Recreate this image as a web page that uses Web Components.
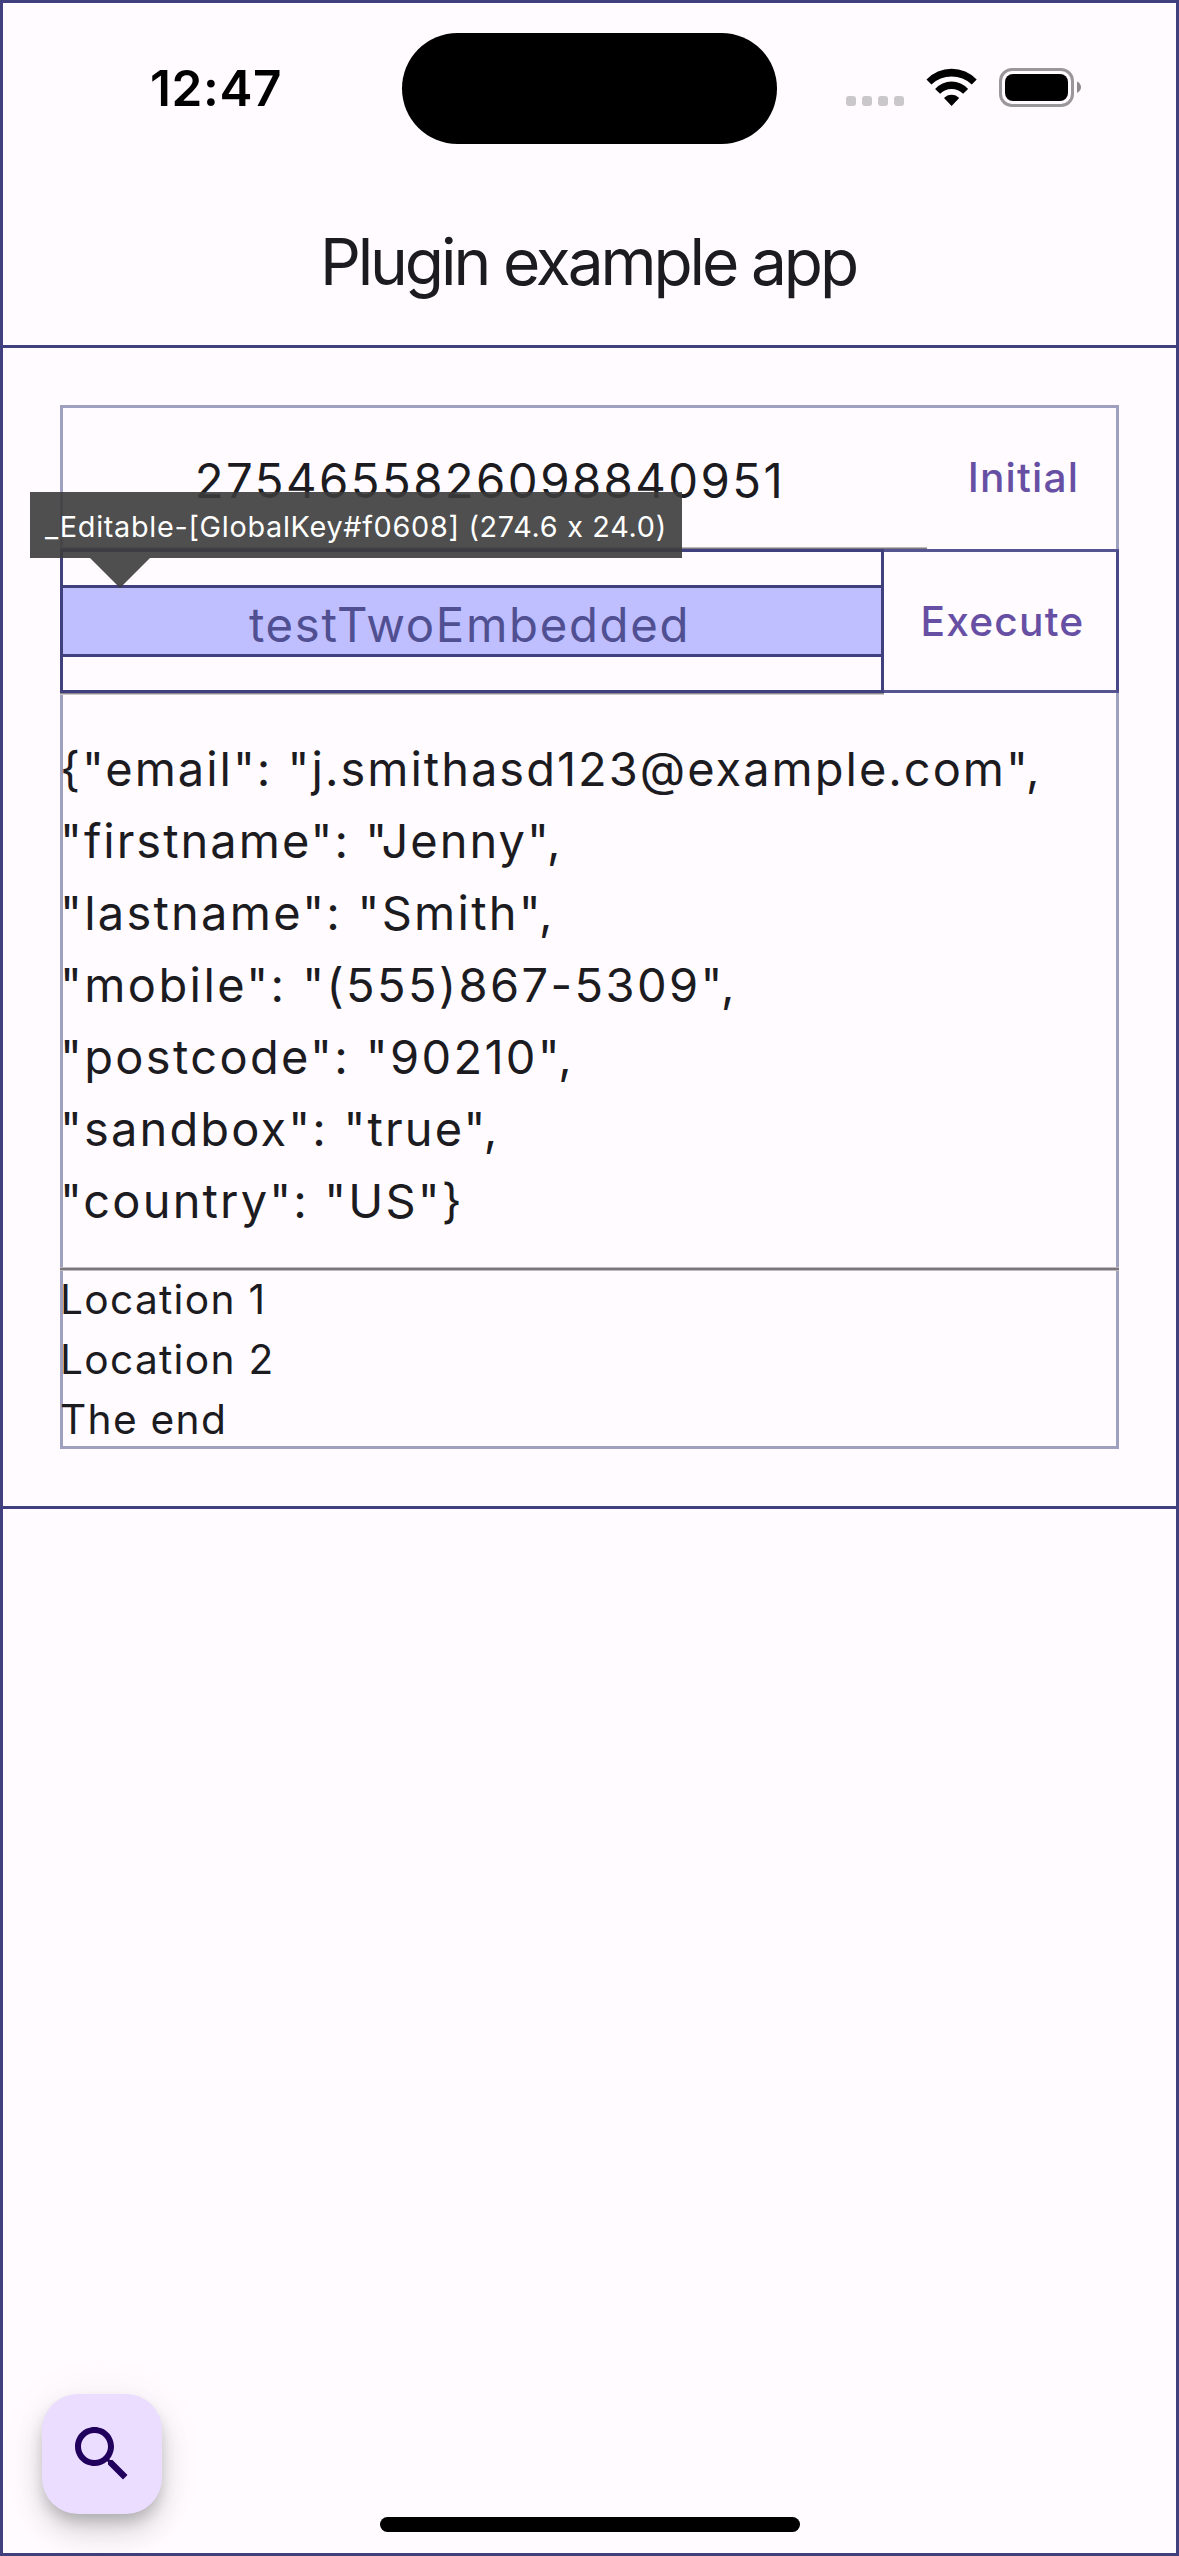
<!DOCTYPE html>
<html lang="en">
<head>
<meta charset="utf-8">
<title>Plugin example app</title>
<style>
html, body { margin: 0; padding: 0; }
body { width: 1179px; height: 2556px; overflow: hidden; background: #fffbff; font-family: Inter, "Liberation Sans", sans-serif; color: #1c1b1f; }
</style>
</head>
<body>
<plugin-app></plugin-app>
<script>
const define = (name, html) => customElements.define(name, class extends HTMLElement {
  constructor() {
    super();
    const t = document.createElement('template');
    t.innerHTML = html;
    this.attachShadow({ mode: 'open' }).append(t.content.cloneNode(true));
  }
});

define('status-bar', `
<style>
:host { display: grid; grid-template-columns: 399px 375px 1fr; align-items: center; height: 171px; color: #000; }
.time { padding: 0 0 2px 147px; font-size: 49.5px; font-weight: 600; line-height: 60px; letter-spacing: .62px; white-space: nowrap; }
.island { height: 111px; border-radius: 55.5px; background: #000; }
.signs { display: flex; padding: 0 0 2px 69px; height: 39px; }
svg { display: block; }
</style>
<div class="time">12:47</div>
<div class="island"></div>
<div class="signs">
  <svg width="240" height="39" viewBox="846 68 240 39">
    <g fill="#cac8ca"><rect x="846" y="96" width="10" height="10" rx="3"/><rect x="862" y="96" width="10" height="10" rx="3"/><rect x="878" y="96" width="10" height="10" rx="3"/><rect x="894" y="96" width="10" height="10" rx="3"/></g>
    <path d="M926.5 79.5 A34.5 34.5 0 0 1 976.7 79.5 L971.8 84.4 A29.5 29.5 0 0 0 931.4 84.4 Z"/>
    <path d="M935.1 88.9 A22.3 22.3 0 0 1 968.1 88.9 L963.1 93.8 A16.4 16.4 0 0 0 940.1 93.8 Z"/>
    <path d="M944 98 A10.3 10.3 0 0 1 959.2 98 L951.6 106 Z"/>
    <rect x="1000.5" y="69.5" width="72" height="36" rx="11.5" fill="none" stroke="#999799" stroke-width="3"/>
    <rect x="1005" y="74" width="63" height="27" rx="8"/>
    <path d="M1077 81.5 Q1081 83.5 1081 87.3 Q1081 91 1077 93 Z" fill="#8c8a8c"/>
  </svg>
</div>`);

define('title-bar', `
<style>
:host { display: flex; justify-content: center; align-items: center; box-sizing: border-box; height: 174px; padding-top: 4.5px; border-bottom: 3px solid #40407f; }
span { font-size: 64px; line-height: 78px; letter-spacing: -3.1px; white-space: nowrap; margin-left: -3px; }
</style>
<span><slot></slot></span>`);

define('text-button', `
<style>
:host { display: flex; justify-content: center; align-items: center; box-sizing: border-box; height: 144px; padding-top: 2px; color: #6750a4; }
span { font-size: 40.7px; font-weight: 500; line-height: 60px; letter-spacing: 1.2px; margin-right: var(--nudge, -1px); }
</style>
<span><slot></slot></span>`);

define('number-field', `
<style>
:host { display: flex; flex-direction: column; justify-content: center; align-items: center; box-sizing: border-box; width: 867px; height: 145px; padding-top: 9px; border-bottom: 2px solid #7f7a80; box-shadow: inset 0 -1px #bbb6bb; }
span { font-size: 47.3px; line-height: 72px; letter-spacing: 2.43px; margin-right: 7px; }
</style>
<span><slot></slot></span>`);

define('selected-field', `
<style>
:host { display: flex; flex-direction: column; justify-content: center; box-sizing: border-box; width: 824px; height: 144px; border: 3px solid #40407f; box-shadow: 0 1px #8d888e, 0 2px #cbc6cb; }
.editable { display: flex; justify-content: center; box-sizing: border-box; height: 72px; background: #bfbfff; border: solid #40407f; border-width: 3px 0; padding-top: 2px; color: #504f91; }
span { font-size: 47.3px; line-height: 70px; letter-spacing: 1.67px; margin-right: 5px; }
</style>
<div class="editable"><span><slot></slot></span></div>`);

define('json-line', `
<style>
:host { display: block; font-size: 47px; line-height: 72px; height: 72px; letter-spacing: var(--track, 2px); white-space: nowrap; font-feature-settings: "calt" 0; }
</style>
<slot></slot>`);

define('inspector-tip', `
<style>
:host { position: absolute; display: block; }
.label { box-sizing: border-box; width: 652px; height: 66px; padding-left: 15px; background: rgba(60,60,60,.9); color: #fff; font-size: 28.8px; line-height: 69px; letter-spacing: .7px; white-space: nowrap; font-feature-settings: "calt" 0; }
.arrow { margin-left: 60px; width: 60px; height: 30px; background: rgba(60,60,60,.9); clip-path: polygon(0 0, 100% 0, 50% 100%); }
</style>
<div class="label"><slot></slot></div><div class="arrow"></div>`);

define('search-fab', `
<style>
:host { position: absolute; width: 120px; height: 120px; display: grid; place-items: center; border-radius: 36px; background: #eaddff; box-shadow: 0 9px 15px -3px rgba(0,0,0,.2), 0 18px 30px rgba(0,0,0,.14), 0 3px 54px rgba(0,0,0,.05); }
svg { display: block; }
</style>
<svg width="72" height="72" viewBox="0 0 24 24" fill="#21005d"><path d="M15.5 14h-.79l-.28-.27C15.41 12.59 16 11.11 16 9.5 16 5.91 13.09 3 9.5 3S3 5.91 3 9.5 5.91 16 9.5 16c1.61 0 3.09-.59 4.23-1.57l.27.28v.79l5 4.99L20.49 19l-4.99-5zm-6 0C7.01 14 5 11.99 5 9.5S7.01 5 9.5 5 14 7.01 14 9.5 11.99 14 9.5 14z"/></svg>`);

define('plugin-app', `
<style>
:host { display: flex; flex-direction: column; box-sizing: border-box; position: relative; width: 1179px; height: 2556px; border: 3px solid #40407f; background: #fffbff; }
main { box-sizing: border-box; height: 1161px; padding: 57px; border-bottom: 3px solid #40407f; }
.box { display: flex; flex-direction: column; box-sizing: border-box; height: 1044px; box-shadow: inset 0 0 0 3px #9f9fbf; }
.row { display: flex; height: 144px; flex: none; }
.row text-button { flex: 1; }
.row .outlined { --nudge: -5px; border: solid #555592; border-width: 3px 3px 3px 0; border-right-color: #484888; }
.json { padding-top: 40px; height: 574px; box-sizing: border-box; flex: none; }
hr { margin: 0; border: 0; height: 4px; flex: none; background: linear-gradient(#bdb9be 1px, #7b767c 1px 3px, #bdb9be 3px); }
.list { margin-top: -1px; font-size: 40.7px; line-height: 60px; letter-spacing: 1.28px; }
.under { position: relative; z-index: 0; }
.over { position: relative; z-index: 1; }
.home { position: absolute; left: 377px; top: 2514px; width: 420px; height: 15px; border-radius: 7.5px; background: #000; }
inspector-tip { left: 27px; top: 489px; z-index: 2; }
search-fab { left: 39px; top: 2391px; }
</style>
<status-bar></status-bar>
<title-bar>Plugin example app</title-bar>
<main>
  <div class="box">
    <div class="row under"><number-field>2754655826098840951</number-field><text-button>Initial</text-button></div>
    <div class="row over"><selected-field>testTwoEmbedded</selected-field><text-button class="outlined">Execute</text-button></div>
    <div class="json">
      <json-line>{"email": "j.smithasd123@example.com",</json-line>
      <json-line>"firstname": "Jenny",</json-line>
      <json-line style="--track:2.25px">"lastname": "Smith",</json-line>
      <json-line style="--track:2.4px">"mobile": "(555)867-5309",</json-line>
      <json-line style="--track:2.33px">"postcode": "90210",</json-line>
      <json-line style="--track:2.14px">"sandbox": "true",</json-line>
      <json-line style="--track:2.15px">"country": "US"}</json-line>
    </div>
    <hr>
    <div class="list"><div>Location 1</div><div>Location 2</div><div>The end</div></div>
  </div>
</main>
<inspector-tip>_Editable-[GlobalKey#f0608] (274.6 x 24.0)</inspector-tip>
<search-fab></search-fab>
<div class="home"></div>`);
</script>
</body>
</html>
